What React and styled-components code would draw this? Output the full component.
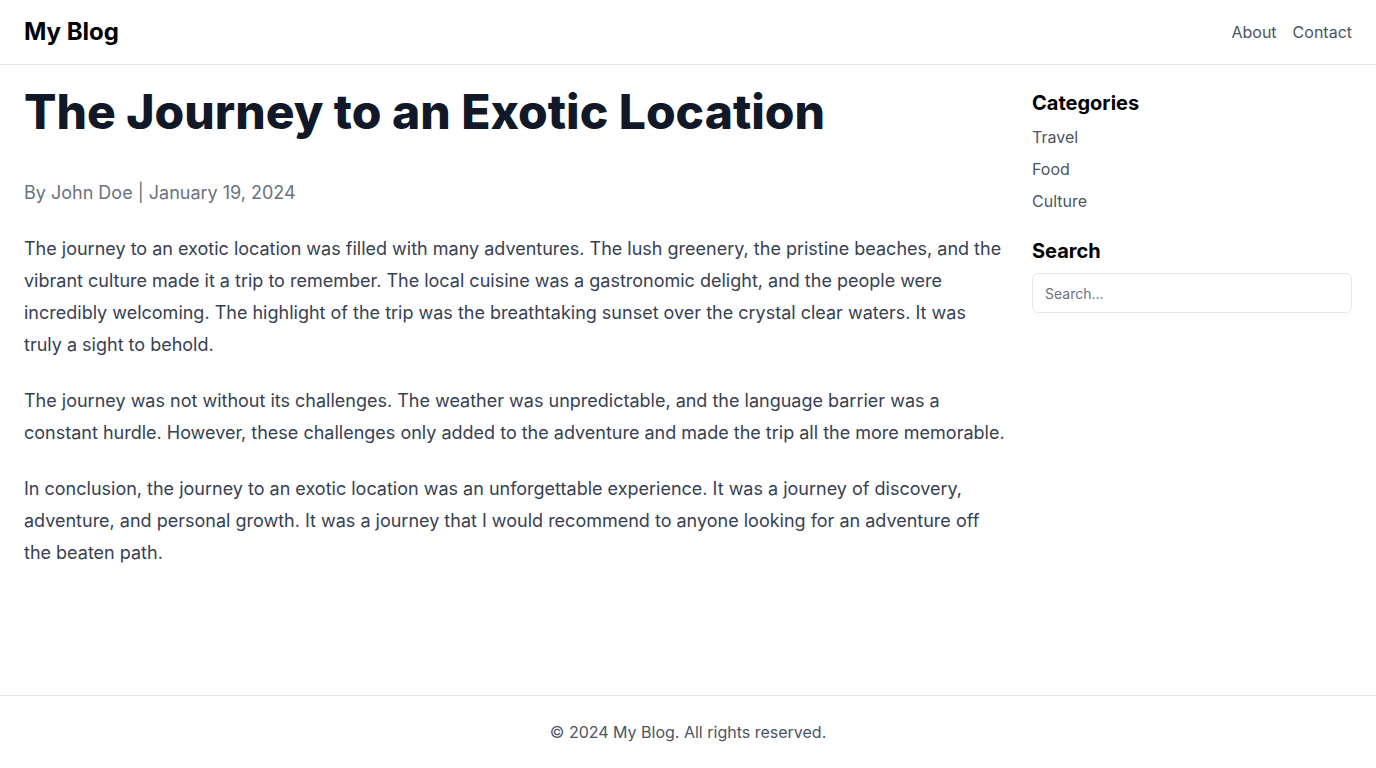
import React from "react";
import styled, { createGlobalStyle } from "styled-components";

const GlobalStyle = createGlobalStyle`
  * { box-sizing: border-box; }
  body {
    margin: 0;
    font-family: Inter, "Noto Sans", sans-serif;
    background: #ffffff;
    color: #111827;
  }
`;

const categories = ["Travel", "Food", "Culture"];

const paragraphs = [
  "The journey to an exotic location was filled with many adventures. The lush greenery, the pristine beaches, and the vibrant culture made it a trip to remember. The local cuisine was a gastronomic delight, and the people were incredibly welcoming. The highlight of the trip was the breathtaking sunset over the crystal clear waters. It was truly a sight to behold.",
  "The journey was not without its challenges. The weather was unpredictable, and the language barrier was a constant hurdle. However, these challenges only added to the adventure and made the trip all the more memorable.",
  "In conclusion, the journey to an exotic location was an unforgettable experience. It was a journey of discovery, adventure, and personal growth. It was a journey that I would recommend to anyone looking for an adventure off the beaten path.",
];

export default function App() {
  return (
    <>
      <GlobalStyle />
      <Page>
        <Header>
          <Logo>My Blog</Logo>
          <Nav>
            <NavLink href="#">About</NavLink>
            <NavLink href="#">Contact</NavLink>
          </Nav>
        </Header>

        <Main>
          <Article>
            <Title>The Journey to an Exotic Location</Title>
            <Meta>By John Doe | January 19, 2024</Meta>
            {paragraphs.map((text, i) => (
              <Paragraph key={i}>{text}</Paragraph>
            ))}
          </Article>

          <Sidebar>
            <Section>
              <SideTitle>Categories</SideTitle>
              <CategoryList>
                {categories.map((c) => (
                  <li key={c}>
                    <CategoryLink href="#">{c}</CategoryLink>
                  </li>
                ))}
              </CategoryList>
            </Section>
            <Section>
              <SideTitle>Search</SideTitle>
              <SearchInput type="text" placeholder="Search..." />
            </Section>
          </Sidebar>
        </Main>

        <Footer>© 2024 My Blog. All rights reserved.</Footer>
      </Page>
    </>
  );
}

const Page = styled.div`
  min-height: 100vh;
  display: flex;
  flex-direction: column;
`;

const Header = styled.header`
  height: 65px;
  padding: 0 24px;
  display: flex;
  align-items: center;
  justify-content: space-between;
  border-bottom: 1px solid #e5e7eb;
`;

const Logo = styled.h1`
  margin: 0;
  font-size: 24px;
  line-height: 32px;
  font-weight: 700;
  color: #000;
`;

const Nav = styled.nav`
  display: flex;
  gap: 16px;
`;

const NavLink = styled.a`
  font-size: 16px;
  line-height: 24px;
  color: #4b5563;
  text-decoration: none;
`;

const Main = styled.main`
  flex: 1;
  display: flex;
  gap: 24px;
  padding: 23px 24px;
`;

const Article = styled.article`
  flex: 1;
  min-width: 0;
`;

const Title = styled.h2`
  margin: 0 0 41px;
  font-size: 48px;
  line-height: 1;
  font-weight: 800;
  color: #111827;
`;

const Meta = styled.p`
  margin: 0 0 24px;
  font-size: 18px;
  line-height: 32px;
  color: #6b7280;
`;

const Paragraph = styled.p`
  margin: 0 0 24px;
  font-size: 18px;
  line-height: 32px;
  color: #374151;
`;

const Sidebar = styled.aside`
  width: 320px;
  flex-shrink: 0;
  display: flex;
  flex-direction: column;
  gap: 24px;
  padding-top: 1px;
`;

const Section = styled.section`
  display: flex;
  flex-direction: column;
  gap: 8px;
`;

const SideTitle = styled.h3`
  margin: 0;
  font-size: 20px;
  line-height: 28px;
  font-weight: 700;
  color: #000;
`;

const CategoryList = styled.ul`
  list-style: none;
  margin: 0;
  padding: 0;
  display: flex;
  flex-direction: column;
  gap: 8px;
`;

const CategoryLink = styled.a`
  font-size: 16px;
  line-height: 24px;
  color: #4b5563;
  text-decoration: none;
`;

const SearchInput = styled.input`
  width: 100%;
  height: 40px;
  padding: 0 12px;
  border: 1px solid #e5e7eb;
  border-radius: 6px;
  font-family: inherit;
  font-size: 14px;
  color: #111827;
  outline: none;

  &::placeholder {
    color: #6b7280;
  }
`;

const Footer = styled.footer`
  border-top: 1px solid #e5e7eb;
  padding: 24px;
  text-align: center;
  font-size: 16px;
  line-height: 24px;
  color: #4b5563;
`;
